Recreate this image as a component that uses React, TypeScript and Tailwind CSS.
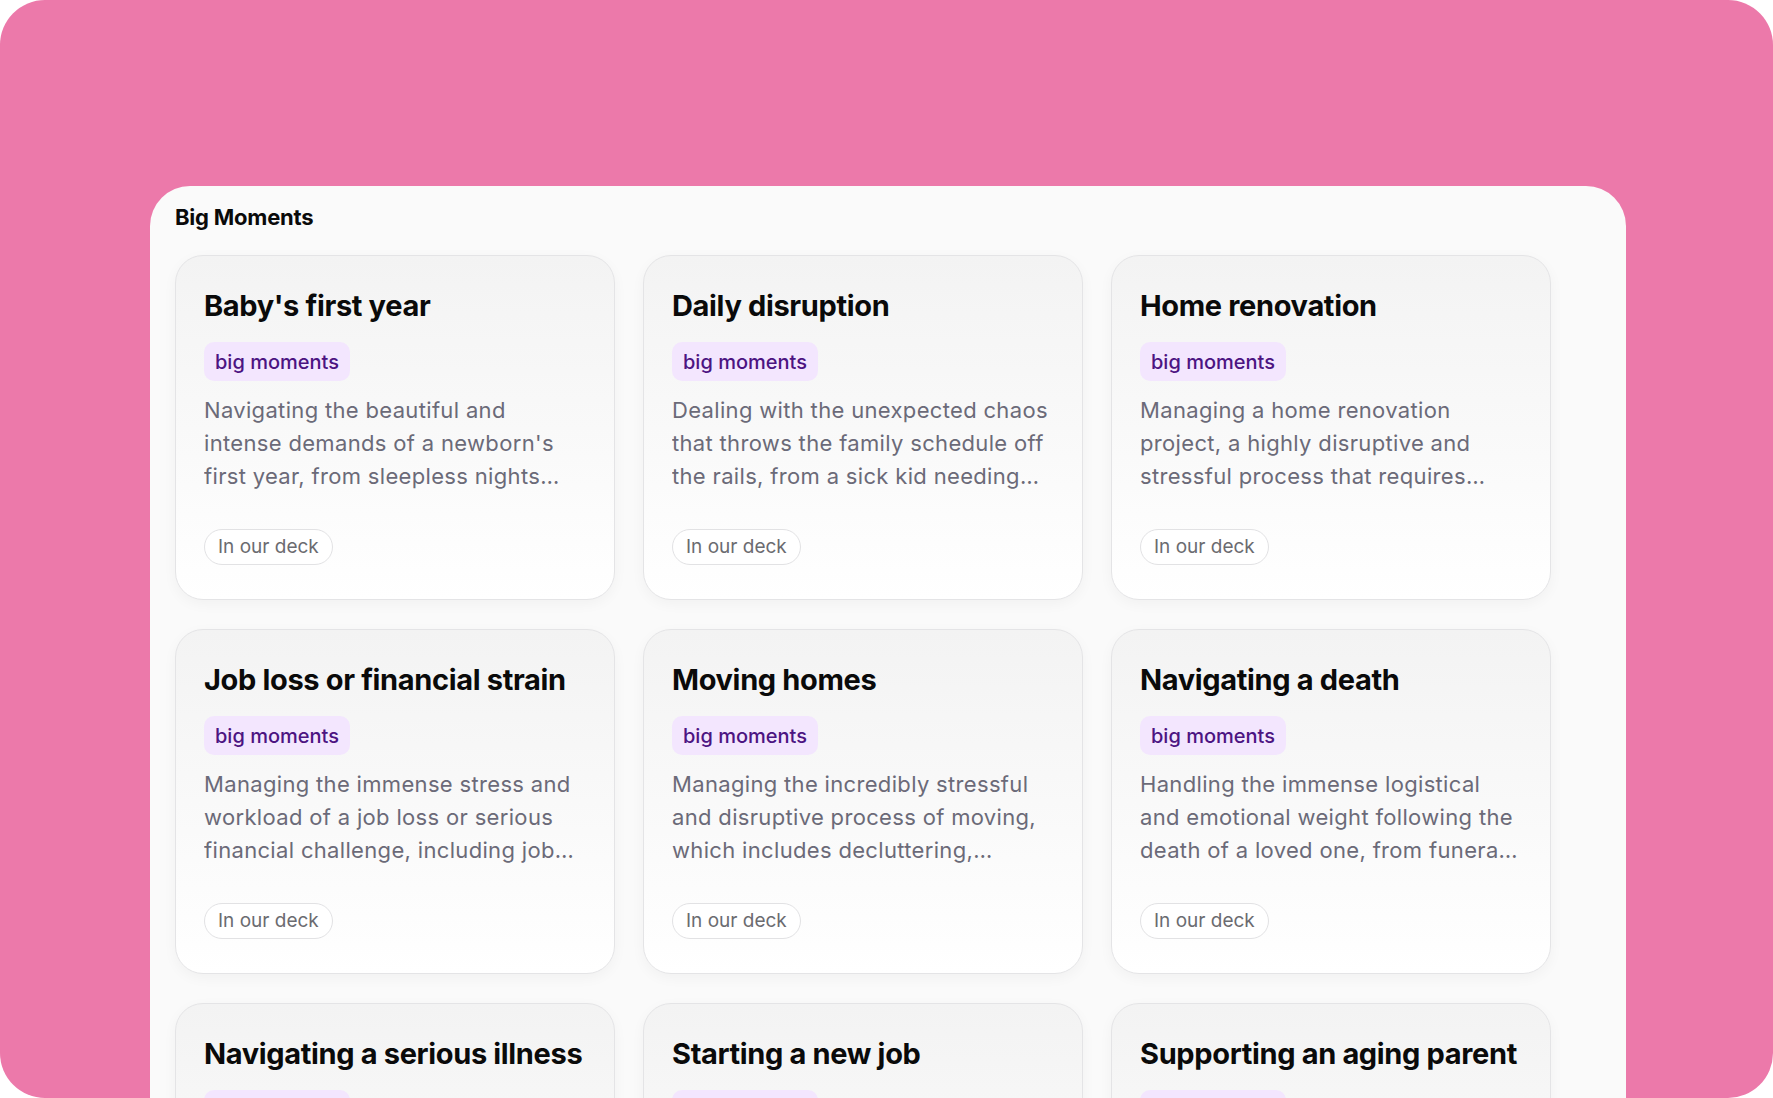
import React from 'react'

const moments = [
  {
    title: "Baby's first year",
    text: "Navigating the beautiful and intense demands of a newborn's first year, from sleepless nights and endless feedings to doctor visits and milestones.",
  },
  {
    title: 'Daily disruption',
    text: 'Dealing with the unexpected chaos that throws the family schedule off the rails, from a sick kid needing care to a cancelled babysitter.',
  },
  {
    title: 'Home renovation',
    text: 'Managing a home renovation project, a highly disruptive and stressful process that requires planning, contractors and budgets.',
  },
  {
    title: 'Job loss or financial strain',
    text: 'Managing the immense stress and workload of a job loss or serious financial challenge, including job searching and budgeting.',
  },
  {
    title: 'Moving homes',
    text: 'Managing the incredibly stressful and disruptive process of moving, which includes decluttering, packing, and settling in.',
  },
  {
    title: 'Navigating a death',
    text: 'Handling the immense logistical and emotional weight following the death of a loved one, from funeral planning to paperwork.',
  },
  {
    title: 'Navigating a serious illness',
    text: 'Coordinating care, appointments and daily life while a family member is facing a serious illness or long recovery.',
  },
  {
    title: 'Starting a new job',
    text: 'Adjusting the household rhythm when someone starts a new job, with new hours, commutes and responsibilities to share.',
  },
  {
    title: 'Supporting an aging parent',
    text: 'Taking on the care of an aging parent, from medical appointments and medications to housing decisions and support.',
  },
]

const MomentCard = ({ title, text }: { title: string; text: string }) => {
  return (
    <div className="flex h-[345px] flex-col rounded-[28px] border-[1.5px] border-[#e4e4e6] bg-gradient-to-b from-[#f3f3f3] to-white px-[28px] pt-[32px] pb-[34px] shadow-[0_4px_14px_rgba(0,0,0,0.04)]">
      <h2 className="text-[29px] leading-[35px] font-bold tracking-[-0.012em] text-[#0a0a0a]">{title}</h2>
      <div className="mt-[19px]">
        <span className="inline-flex h-[39px] items-center rounded-[10px] bg-[#f3e6fe] px-[11px] text-[20px] font-medium text-[#4c1482]">
          big moments
        </span>
      </div>
      <p className="mt-[13px] line-clamp-3 text-[22px] leading-[33px] tracking-[0.015em] text-[#6b6a78]">{text}</p>
      <div className="mt-auto">
        <span className="inline-flex h-[36px] items-center rounded-full border-[1.5px] border-[#e2e2e4] bg-white px-[13px] text-[19px] text-[#6b6b70]">
          In our deck
        </span>
      </div>
    </div>
  )
}

const App = () => {
  return (
    <div className="h-[1098px] w-[1773px] overflow-hidden bg-white font-['Inter',sans-serif]">
      <div className="h-full overflow-hidden rounded-[45px] bg-[#ec79aa] pt-[186px] pl-[150px]">
        <div className="h-[1000px] w-[1476px] rounded-[40px] bg-[#fafafa] pt-[16px] pl-[25px]">
          <h1 className="text-[22px] leading-[30px] font-bold tracking-[-0.01em] text-[#0a0a0a]">Big Moments</h1>
          <div className="mt-[23px] grid grid-cols-[repeat(3,440px)] gap-x-[28px] gap-y-[29px]">
            {moments.map((m) => (
              <MomentCard key={m.title} title={m.title} text={m.text} />
            ))}
          </div>
        </div>
      </div>
    </div>
  )
}

export default App
